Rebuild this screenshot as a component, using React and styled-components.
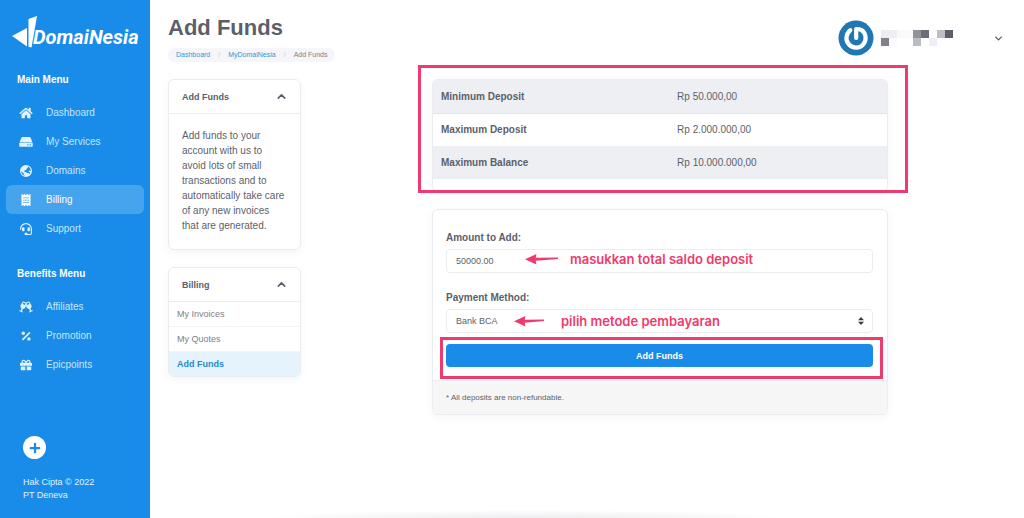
import React, { useState } from "react";
import styled, { createGlobalStyle } from "styled-components";
import {
  FaHome,
  FaReceipt,
  FaHeadset,
  FaGlassCheers,
  FaGift,
  FaPlus
} from "react-icons/fa";
import { FiChevronDown, FiChevronUp } from "react-icons/fi";

const GlobalStyle = createGlobalStyle`
  :root {
    --primary: #188ce8;
    --text: #5c5f6b;
    --muted: #7d808b;
    --border: #ebecf0;
    --pink: #ee3a6c;
  }

  * {
    box-sizing: border-box;
  }

  body {
    margin: 0;
    background: #fff;
    color: var(--text);
    font-family: "Liberation Sans", Arial, sans-serif;
    font-size: 10px;
    line-height: 15px;
  }

  input, select, button {
    font-family: inherit;
  }
`;

const Layout = styled.div`
  display: grid;
  grid-template-columns: 150px 1fr;
  min-height: 100vh;
`;

const Sidebar = styled.aside`
  display: flex;
  flex-direction: column;
  padding: 16px 6px;
  background: var(--primary);
  color: #fff;
`;

const Logo = styled.a`
  display: flex;
  align-items: center;
  height: 33px;
  margin: 0 6px 19px;
  color: #fff;
  text-decoration: none;

  svg {
    flex: none;
  }
`;

const LogoText = styled.span`
  margin-left: -4px;
  padding-top: 9px;
  font-family: Roboto, sans-serif;
  font-size: 20px;
  font-weight: bold;
  font-style: italic;
  line-height: 24px;
`;

const MenuTitle = styled.h2`
  margin: 4px 11px 11px;
  font-size: 10px;
  line-height: 15px;
`;

const MenuList = styled.ul`
  margin: 0 0 19px;
  padding: 0;
  list-style: none;
`;

const MenuLink = styled.a`
  display: flex;
  align-items: center;
  gap: 13px;
  height: 29px;
  padding-left: 13px;
  border-radius: 6px;
  background: ${({ $active }) => ($active ? "#46a4ee" : "transparent")};
  color: ${({ $active }) => ($active ? "#fff" : "#c9e5fb")};
  text-decoration: none;

  svg {
    width: 14px;
    height: 12px;
    color: ${({ $active }) => ($active ? "#fff" : "#e3f2fd")};
  }
`;

const SidebarFooter = styled.footer`
  margin-top: auto;
  padding: 0 17px;
  font-size: 9px;
  line-height: 13px;
  color: #e3f2fd;
`;

const AddButton = styled.button`
  display: flex;
  align-items: center;
  justify-content: center;
  width: 23px;
  height: 23px;
  margin-bottom: 17px;
  padding: 0;
  border: none;
  border-radius: 50%;
  background: #fff;
  color: var(--primary);
  cursor: pointer;
`;

const Main = styled.main`
  padding: 14px 20px 0 18px;
  background: radial-gradient(ellipse 30% 8px at 43% 100%, #ececee, #fff) no-repeat;
`;

const Header = styled.header`
  display: flex;
  justify-content: space-between;
  align-items: flex-start;
  margin-bottom: 17px;
`;

const Title = styled.h1`
  margin: 0 0 6px;
  font-size: 22px;
  line-height: 28px;
`;

const Breadcrumb = styled.nav`
  display: flex;
  gap: 8px;
  padding: 0 8px;
  border-radius: 7px;
  background: #f5f5fa;
  color: var(--muted);
  font-size: 7px;
  line-height: 14px;

  a {
    color: #2b9bd8;
    text-decoration: none;
  }

  i {
    color: #c6c8d2;
    font-style: normal;
  }
`;

const Account = styled.button`
  display: flex;
  align-items: center;
  gap: 7px;
  margin-top: 6px;
  padding: 0;
  border: none;
  background: none;
  color: var(--text);
  cursor: pointer;

  > svg:last-child {
    margin-left: 33px;
  }
`;

const Content = styled.div`
  display: grid;
  grid-template-columns: 133px 1fr;
  gap: 18px;
  align-items: start;
  padding-right: 3px;
`;

const Column = styled.div`
  display: flex;
  flex-direction: column;
  gap: 17px;
`;

const CenterColumn = styled(Column)`
  width: 100%;
  max-width: 456px;
  margin: 0 auto;
`;

const Card = styled.section`
  overflow: hidden;
  border: 1px solid var(--border);
  border-radius: 6px;
  background: #fff;
  box-shadow: 0 3px 8px rgba(60, 70, 130, 0.05);
`;

const CardHeader = styled.button`
  display: flex;
  align-items: center;
  justify-content: space-between;
  width: 100%;
  height: 34px;
  padding: 0 12px 0 13px;
  border: none;
  border-bottom: 1px solid var(--border);
  background: none;
  color: var(--text);
  font-size: 9px;
  font-weight: bold;
  cursor: pointer;
`;

const CardText = styled.p`
  margin: 0;
  padding: 14px 13px 16px;
`;

const SubLink = styled.a`
  display: block;
  padding: 0 8px;
  border-top: ${({ $first }) => ($first ? "none" : "1px solid #f3f3f6")};
  background: ${({ $active }) => ($active ? "#e5f3fc" : "#fff")};
  color: ${({ $active }) => ($active ? "#2689cf" : "var(--muted)")};
  font-size: 9px;
  font-weight: ${({ $active }) => ($active ? "bold" : "normal")};
  line-height: 24px;
  text-decoration: none;
`;

const Marked = styled.div`
  position: relative;
`;

const Frame = styled.span`
  position: absolute;
  inset: ${({ $inset }) => $inset};
  border: 3px solid var(--pink);
  pointer-events: none;
`;

const LimitsTable = styled.table`
  width: 100%;
  margin-bottom: 12px;
  border-collapse: collapse;
  text-align: left;

  th, td {
    height: 33px;
    padding: 0 8px;
  }

  th {
    width: 52%;
  }

  tr:nth-child(odd) {
    background: #eeeff2;
  }

  tr:first-child {
    border-bottom: 1px solid #e4e5e9;
  }
`;

const Form = styled.form`
  padding: 20px 14px 13px 13px;
`;

const Field = styled.div`
  position: relative;
  margin-bottom: ${({ $last }) => ($last ? "11px" : "17px")};

  label {
    display: block;
    margin-bottom: 4px;
    font-weight: bold;
  }

  input, select {
    display: block;
    width: 100%;
    height: 24px;
    padding: 0 9px;
    border: 1px solid var(--border);
    border-radius: 4px;
    background: #fff;
    color: var(--text);
    font-size: 9px;
    appearance: none;
  }
`;

const SelectArrows = styled.svg`
  position: absolute;
  right: 9px;
  bottom: 8px;
  pointer-events: none;
`;

const Note = styled.div`
  position: absolute;
  bottom: ${({ $bottom }) => $bottom};
  left: ${({ $left }) => $left};
  display: flex;
  align-items: center;
  gap: ${({ $gap }) => $gap};
  color: var(--pink);
  font-family: Inter, sans-serif;
  font-size: 13px;
  font-weight: 600;
  line-height: 16px;
  white-space: nowrap;
  pointer-events: none;
`;

const SubmitButton = styled.button`
  display: block;
  width: 100%;
  height: 23px;
  border: none;
  border-radius: 4px;
  background: var(--primary);
  color: #fff;
  font-size: 9px;
  font-weight: bold;
  cursor: pointer;
`;

const CardFooter = styled.footer`
  padding: 9px 13px;
  border-top: 1px solid var(--border);
  background: #f6f6f7;
  font-size: 8px;
`;

const DriveIcon = () => (
  <svg viewBox="0 0 14 12" fill="currentColor">
    <path d="M4 1h6a2 2 0 0 1 1.900 1.300L13.300 6H.7l1.400-3.700A2 2 0 0 1 4 1z" />
    <path
      fillRule="evenodd"
      d="M1.200 6.600h11.600a1 1 0 0 1 1 1v2.200a1 1 0 0 1-1 1H1.200a1 1 0 0 1-1-1V7.600a1 1 0 0 1 1-1zM8.300 8.200v1.200h1.200V8.200zM10.800 8.200v1.200H12V8.200z"
    />
  </svg>
);

const WorldIcon = () => (
  <svg viewBox="0 0 12 12" fill="currentColor">
    <path
      fillRule="evenodd"
      d="M6 0a6 6 0 1 0 0 12A6 6 0 0 0 6 0zM1.300 6.200 3.800 8.500v1l1.400 1.300C3 10.500 1.200 8.700 1.300 6.200zM9.800 9 8.500 8H7.200L6 7H4.500V5.600L6.300 5V3.900L7.800 3V1.500c2 .8 3 2.500 2.900 4.800L9.500 5.500 8.200 6.200l1.900 1.300z"
    />
  </svg>
);

const PercentIcon = () => (
  <svg viewBox="0 0 12 12" fill="currentColor">
    <circle cx="3.300" cy="3.300" r="1.700" />
    <circle cx="8.900" cy="8.900" r="1.700" />
    <path d="M9.300 1.800 10.500 3 3 10.500 1.800 9.300z" />
  </svg>
);

const AvatarIcon = () => (
  <svg width="36" height="36" viewBox="0 0 36 36" fill="none">
    <circle cx="18" cy="18" r="17.500" fill="#1f78b4" />
    <path
      d="M12.300 10.300a9.600 9.600 0 1 0 11.200-.2c-1.500-.8-2.900-1.100-5.300-1.100v9"
      stroke="#fff"
      strokeWidth="4.200"
      strokeLinecap="round"
      strokeLinejoin="round"
    />
  </svg>
);

const blocks = [
  [0, 0, "#ececf1"], [8, 0, "#eeeef6"], [16, 0, "#fafafd"], [24, 0, "#fafafd"],
  [32, 0, "#929399"], [40, 0, "#6d6e7a"], [56, 0, "#bdbec3"], [64, 0, "#5c5e6b"],
  [0, 8, "#808189"], [32, 8, "#bbbcc3"], [48, 8, "#eeeef6"], [8, 8, "#fcfcfe"]
];

const MaskedName = () => (
  <svg width="72" height="16" viewBox="0 0 72 16">
    {blocks.map(([x, y, fill]) => (
      <rect key={`${x}-${y}`} x={x} y={y} width="8" height="8" fill={fill} />
    ))}
  </svg>
);

const Arrow = ({ width }) => (
  <svg width={width} height="12" viewBox={`0 0 ${width} 12`} fill="currentColor">
    <path d={`M0 6.200 11.500 1 10.700 4.800 ${width} 4.600v1.400L10.700 7.800l.8 3.700z`} />
  </svg>
);

const mainMenu = [
  { label: "Dashboard", icon: FaHome },
  { label: "My Services", icon: DriveIcon },
  { label: "Domains", icon: WorldIcon },
  { label: "Billing", icon: FaReceipt, active: true },
  { label: "Support", icon: FaHeadset }
];

const benefitsMenu = [
  { label: "Affiliates", icon: FaGlassCheers },
  { label: "Promotion", icon: PercentIcon },
  { label: "Epicpoints", icon: FaGift }
];

const limits = [
  ["Minimum Deposit", "Rp 50.000,00"],
  ["Maximum Deposit", "Rp 2.000.000,00"],
  ["Maximum Balance", "Rp 10.000.000,00"]
];

const Menu = ({ title, items }) => (
  <nav>
    <MenuTitle>{title}</MenuTitle>
    <MenuList>
      {items.map(({ label, icon: Icon, active }) => (
        <li key={label}>
          <MenuLink href="#" $active={active}>
            <Icon />
            {label}
          </MenuLink>
        </li>
      ))}
    </MenuList>
  </nav>
);

const Panel = ({ title, children }) => {
  const [open, setOpen] = useState(true);

  return (
    <Card>
      <CardHeader type="button" aria-expanded={open} onClick={() => setOpen(!open)}>
        {title}
        {open ? (
          <FiChevronUp size={13} strokeWidth={3} />
        ) : (
          <FiChevronDown size={13} strokeWidth={3} />
        )}
      </CardHeader>
      {open && children}
    </Card>
  );
};

const App = () => {
  const [amount, setAmount] = useState("50000.00");

  return (
    <>
      <GlobalStyle />
      <Layout>
        <Sidebar>
          <Logo href="#">
            <svg width="25" height="33" viewBox="0 0 25 33" fill="#fff">
              <path d="M0 20 15 12v18.500z" />
              <path d="M16.500 3 25 0l-5.500 31.500-3-.8z" />
            </svg>
            <LogoText>DomaiNesia</LogoText>
          </Logo>
          <Menu title="Main Menu" items={mainMenu} />
          <Menu title="Benefits Menu" items={benefitsMenu} />
          <SidebarFooter>
            <AddButton type="button" aria-label="Add">
              <FaPlus size={12} />
            </AddButton>
            Hak Cipta © 2022
            <br />
            PT Deneva
          </SidebarFooter>
        </Sidebar>

        <Main>
          <Header>
            <div>
              <Title>Add Funds</Title>
              <Breadcrumb>
                <a href="#">Dashboard</a>
                <i>/</i>
                <a href="#">MyDomaiNesia</a>
                <i>/</i>
                <span>Add Funds</span>
              </Breadcrumb>
            </div>
            <Account type="button" aria-label="Account">
              <AvatarIcon />
              <MaskedName />
              <FiChevronDown size={11} strokeWidth={3} />
            </Account>
          </Header>

          <Content>
            <Column>
              <Panel title="Add Funds">
                <CardText>
                  Add funds to your account with us to avoid lots of small
                  transactions and to automatically take care of any new
                  invoices that are generated.
                </CardText>
              </Panel>
              <Panel title="Billing">
                <SubLink href="#" $first>My Invoices</SubLink>
                <SubLink href="#">My Quotes</SubLink>
                <SubLink href="#" $active>Add Funds</SubLink>
              </Panel>
            </Column>

            <CenterColumn>
              <Marked>
                <Card>
                  <LimitsTable>
                    <tbody>
                      {limits.map(([name, value]) => (
                        <tr key={name}>
                          <th scope="row">{name}</th>
                          <td>{value}</td>
                        </tr>
                      ))}
                    </tbody>
                  </LimitsTable>
                </Card>
                <Frame $inset="-14px -20px -1px -14px" />
              </Marked>

              <Card>
                <Form onSubmit={(e) => e.preventDefault()}>
                  <Field>
                    <label htmlFor="amount">Amount to Add:</label>
                    <input
                      type="text"
                      id="amount"
                      value={amount}
                      onChange={(e) => setAmount(e.target.value)}
                    />
                    <Note $left="79px" $bottom="6px" $gap="12px">
                      <Arrow width={33} />
                      masukkan total saldo deposit
                    </Note>
                  </Field>
                  <Field $last>
                    <label htmlFor="method">Payment Method:</label>
                    <select id="method">
                      <option>Bank BCA</option>
                    </select>
                    <SelectArrows width="6" height="8" viewBox="0 0 6 8" fill="#3a3b42">
                      <path d="M3 0 6 3.300H0zM3 8 0 4.700h6z" />
                    </SelectArrows>
                    <Note $left="68px" $bottom="4px" $gap="17px">
                      <Arrow width={30} />
                      pilih metode pembayaran
                    </Note>
                  </Field>
                  <Marked>
                    <SubmitButton type="submit">Add Funds</SubmitButton>
                    <Frame $inset="-7px -10px -12px -6px" />
                  </Marked>
                </Form>
                <CardFooter>* All deposits are non-refundable.</CardFooter>
              </Card>
            </CenterColumn>
          </Content>
        </Main>
      </Layout>
    </>
  );
};

export default App;
